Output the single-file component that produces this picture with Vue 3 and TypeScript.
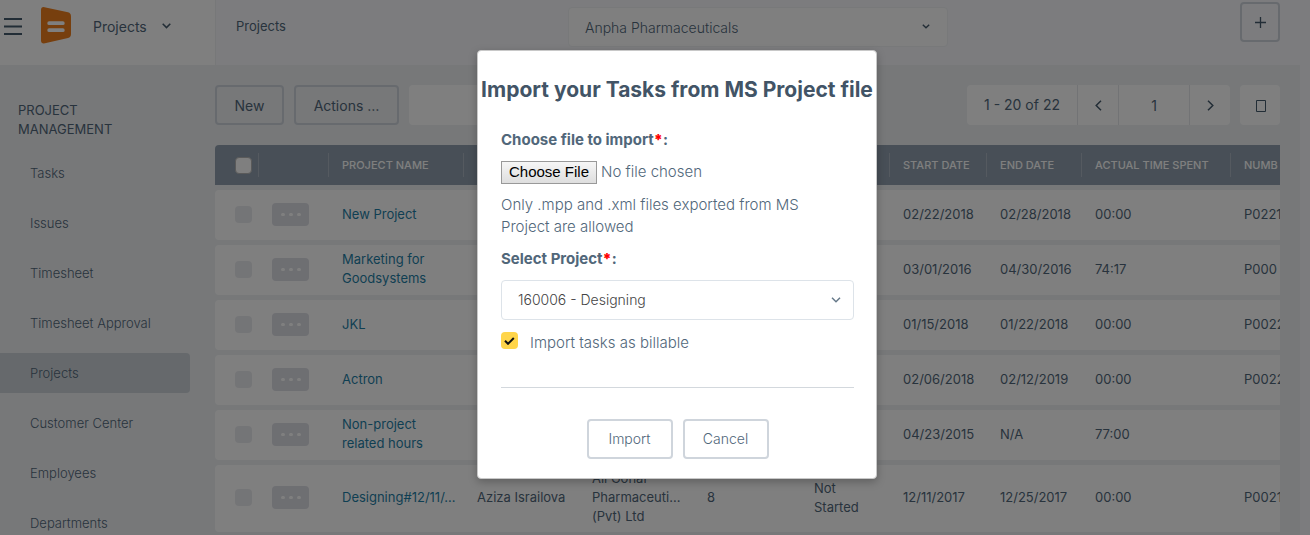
<script setup lang="ts">
import { ref } from 'vue'

interface ProjectRow {
  name: string
  manager: string
  client: string
  count: string
  status: string
  start: string
  end: string
  spent: string
  number: string
}

const menu: string[] = [
  'Tasks', 'Issues', 'Timesheet', 'Timesheet Approval',
  'Projects', 'Customer Center', 'Employees', 'Departments',
]
const active = 'Projects'

const columns: string[] = ['PROJECT NAME', '', '', '', '', 'START DATE', 'END DATE', 'ACTUAL TIME SPENT', 'NUMB']

const row = (name: string, start: string, end: string, spent: string, number: string): ProjectRow => ({
  name, start, end, spent, number, manager: '', client: '', count: '', status: '',
})

const rows: ProjectRow[] = [
  row('New Project', '02/22/2018', '02/28/2018', '00:00', 'P0221'),
  row('Marketing for Goodsystems', '03/01/2016', '04/30/2016', '74:17', 'P000'),
  row('JKL', '01/15/2018', '01/22/2018', '00:00', 'P0022'),
  row('Actron', '02/06/2018', '02/12/2019', '00:00', 'P0022'),
  row('Non-project related hours', '04/23/2015', 'N/A', '77:00', ''),
  {
    name: 'Designing#12/11/…',
    manager: 'Aziza Israilova',
    client: 'Ali Gohar Pharmaceuti… (Pvt) Ltd',
    count: '8',
    status: 'Not Started',
    start: '12/11/2017',
    end: '12/25/2017',
    spent: '00:00',
    number: 'P0021',
  },
]

const billable = ref(true)
</script>

<template>
  <div class="app">
    <div class="shell">
      <header class="brand">
        <button class="plain" type="button" aria-label="Menu">
          <svg width="18" height="17" viewBox="0 0 18 17"><path d="M0 1h18M0 8.500h18M0 16h18" fill="none" stroke="#455a6c" stroke-width="2" /></svg>
        </button>
        <svg class="logo" width="30" height="37" viewBox="0 0 30 37">
          <path d="M3.500.2 27 5.200q3 .8 3 4V27q0 3.200-3 4L4 36.300Q0 37 0 33.500V3Q0-.4 3.500.2Z" fill="#ee7f1d" />
          <path d="M8.200 16.200h13.600M8.200 23.200h13.600" stroke="#fff" stroke-width="3.800" stroke-linecap="round" />
        </svg>
        <button class="plain switcher" type="button">
          Projects
          <svg width="9" height="6" viewBox="0 0 9 6"><path d="m.7.700 3.800 3.900L8.300.7" fill="none" stroke="#455a6c" stroke-width="1.500" /></svg>
        </button>
      </header>

      <header class="topbar">
        <span>Projects</span>
        <div class="pick org">
          <select aria-label="Organization"><option>Anpha Pharmaceuticals</option></select>
          <svg width="8" height="5" viewBox="0 0 8 5"><path d="m.8.700 3.200 3L7.200.7" fill="none" stroke="#455a6c" stroke-width="1.400" /></svg>
        </div>
        <button class="btn plus" type="button" aria-label="Add">
          <svg width="11" height="11" viewBox="0 0 11 11"><path d="M5.500 0v11M0 5.500h11" stroke="#455a6c" stroke-width="1.300" /></svg>
        </button>
      </header>

      <nav class="side">
        <h2>PROJECT MANAGEMENT</h2>
        <a v-for="m in menu" :key="m" href="#" :class="{ on: m === active }">{{ m }}</a>
      </nav>

      <main class="main">
        <div class="tools">
          <button class="btn new" type="button">New</button>
          <button class="btn bulk" type="button">Actions …</button>
          <input class="search" type="text" aria-label="Search" />
          <div class="pager">
            <span class="range">1 - 20 of 22</span>
            <button type="button" aria-label="Previous page">
              <svg width="7" height="11" viewBox="0 0 7 11"><path d="M6 .700 1.200 5.500 6 10.300" fill="none" stroke="#455a6c" stroke-width="1.500" /></svg>
            </button>
            <input type="text" value="1" aria-label="Page" />
            <button type="button" aria-label="Next page">
              <svg width="7" height="11" viewBox="0 0 7 11"><path d="M1 .700 5.800 5.500 1 10.300" fill="none" stroke="#455a6c" stroke-width="1.500" /></svg>
            </button>
          </div>
          <button class="config" type="button" aria-label="Columns">
            <svg width="10" height="12" viewBox="0 0 10 12"><path d="M.5.500h9v11h-9z" fill="none" stroke="#455a6c" /></svg>
          </button>
        </div>

        <div class="scroller">
          <table>
            <colgroup>
              <col class="w43" /><col class="w70" /><col class="w135" /><col class="w115" /><col class="w115" />
              <col class="w107" /><col class="w89" /><col class="w97" /><col class="w95" /><col class="w149" /><col />
            </colgroup>
            <thead>
              <tr>
                <th class="tick"><span><input type="checkbox" aria-label="Select all" /></span></th>
                <th><span></span></th>
                <th v-for="(c, i) in columns" :key="i"><span>{{ c }}</span></th>
              </tr>
            </thead>
            <tbody>
              <tr v-for="r in rows" :key="r.name">
                <td class="tick"><input type="checkbox" :aria-label="r.name" /></td>
                <td>
                  <button class="more" type="button" aria-label="Row actions"><i></i><i></i><i></i></button>
                </td>
                <td><a href="#">{{ r.name }}</a></td>
                <td class="one">{{ r.manager }}</td>
                <td>{{ r.client }}</td>
                <td>{{ r.count }}</td>
                <td>{{ r.status }}</td>
                <td class="one">{{ r.start }}</td>
                <td class="one">{{ r.end }}</td>
                <td>{{ r.spent }}</td>
                <td class="one">{{ r.number }}</td>
              </tr>
            </tbody>
          </table>
        </div>
      </main>
      <div class="track"></div>
    </div>

    <div class="overlay">
      <form class="modal" role="dialog" aria-labelledby="dialog-title" @submit.prevent>
        <h1 id="dialog-title">Import your Tasks from MS Project file</h1>
        <div class="body">
          <label class="field" for="file">Choose file to import<b>*</b>:</label>
          <input id="file" class="file" type="file" />
          <p>Only .mpp and .xml files exported from MS Project are allowed</p>
          <label class="field" for="project">Select Project<b>*</b>:</label>
          <div class="pick project">
            <select id="project"><option>160006 - Designing</option></select>
            <svg width="10" height="6" viewBox="0 0 10 6"><path d="m1 .700 4 4 4-4" fill="none" stroke="#66798a" stroke-width="1.500" /></svg>
          </div>
          <div class="billable">
            <span class="box">
              <input id="billable" v-model="billable" type="checkbox" />
              <svg v-if="billable" width="11" height="8" viewBox="0 0 11 8"><path d="m1 3.800 3 3L9.800 1" fill="none" stroke="#111" stroke-width="2" /></svg>
            </span>
            <label for="billable">Import tasks as billable</label>
          </div>
          <div class="actions">
            <button class="btn" type="submit">Import</button>
            <button class="btn" type="button">Cancel</button>
          </div>
        </div>
      </form>
    </div>
  </div>
</template>

<style>
body {
  margin: 0;
  background: #eef0f3;
}
</style>

<style scoped>
.app {
  position: relative;
  height: 100vh;
  overflow: hidden;
  font: 13px/19px Inter, "Open Sans", sans-serif;
  color: #51677a;
}
.app * {
  box-sizing: border-box;
}
button, input, select {
  font: inherit;
  color: inherit;
  margin: 0;
}
a {
  text-decoration: none;
}
svg {
  display: block;
  flex: none;
}
.shell {
  display: grid;
  grid-template: 65px 1fr / 215px minmax(0, 1fr) 10px;
  min-height: 100%;
}
.brand {
  display: flex;
  align-items: flex-start;
  padding: 7px 4px;
  background: #fff;
}
.plain {
  display: flex;
  align-items: center;
  height: 38px;
  padding: 0;
  border: 0;
  background: none;
}
.logo {
  margin-left: 19px;
}
.switcher {
  gap: 15px;
  margin-left: 22px;
  font-size: 14px;
}
.topbar {
  display: grid;
  grid-template-columns: 1fr 380px 1fr;
  padding: 2px 20px;
  background: #f8f9fc;
  border-left: 1px solid #eef0f3;
}
.topbar > span {
  padding-top: 15px;
}
.pick {
  position: relative;
}
.pick select {
  appearance: none;
  display: block;
  width: 100%;
  height: 40px;
  padding: 0 16px;
  border: 1px solid #dde3e9;
  border-radius: 4px;
  background: #fff;
  font-size: 14px;
}
.pick svg {
  position: absolute;
  right: 13px;
  top: 17px;
  pointer-events: none;
}
.org {
  padding-top: 5px;
}
.org select {
  border-color: #f0f2f5;
  font-weight: 300;
}
.org svg {
  top: 22px;
  right: 18px;
}
.btn {
  height: 40px;
  padding: 0;
  border: 2px solid #cfd5dc;
  border-radius: 4px;
  background: none;
  font-size: 14px;
}
.new {
  width: 69px;
}
.bulk {
  width: 105px;
}
.plus {
  display: flex;
  align-items: center;
  justify-content: center;
  justify-self: end;
  width: 40px;
}
.side {
  display: flex;
  flex-direction: column;
  gap: 10px;
  padding: 36px 25px 0 0;
}
.side h2 {
  width: 140px;
  margin: 0 0 4px;
  padding-left: 18px;
  font-size: 13px;
  font-weight: 400;
}
.side a {
  padding-left: 30px;
  line-height: 40px;
  font-weight: 300;
  color: #51677a;
  border-radius: 0 4px 4px 0;
}
.side .on {
  background: #ccd3d8;
}
.main {
  padding: 20px 20px 0 0;
}
.tools {
  display: flex;
  gap: 10px;
}
.search {
  width: 260px;
  border: 0;
  border-radius: 4px;
  background: #fff;
}
.pager {
  display: flex;
  height: 40px;
  margin-left: auto;
  border-radius: 4px;
  background: #fff;
  font-size: 14px;
}
.pager > * {
  border: 0;
  border-left: 1px solid #e4e7eb;
  background: none;
}
.range {
  width: 110px;
  border-left: 0;
  line-height: 39px;
  text-align: center;
}
.pager button {
  display: flex;
  align-items: center;
  justify-content: center;
  width: 41px;
  padding: 0;
}
.pager input {
  width: 71px;
  padding: 0;
  text-align: center;
}
.config {
  display: flex;
  align-items: center;
  justify-content: center;
  width: 40px;
  padding: 2px 0 0 2px;
  border: 0;
  border-radius: 4px;
  background: #fff;
}
.scroller {
  margin-top: 15px;
  overflow: hidden;
}
table {
  width: 100%;
  min-width: 1135px;
  table-layout: fixed;
  border-collapse: separate;
  border-spacing: 0 5px;
}
.w43 { width: 43px; }
.w70 { width: 70px; }
.w89 { width: 89px; }
.w95 { width: 95px; }
.w97 { width: 97px; }
.w107 { width: 107px; }
.w115 { width: 115px; }
.w135 { width: 135px; }
.w149 { width: 149px; }
th {
  height: 40px;
  padding: 0;
  background: #909fae;
  color: #fff;
  font-size: 11px;
  font-weight: 500;
  text-align: left;
  white-space: nowrap;
}
th span {
  display: flex;
  align-items: center;
  height: 24px;
  padding-left: 13px;
  border-left: 1px solid #aab5c0;
}
th:first-child {
  border-radius: 4px 0 0 0;
}
td {
  height: 50px;
  padding: 4px 6px 6px 14px;
  background: #fff;
}
td:first-child {
  border-radius: 4px 0 0 4px;
}
td.one {
  white-space: nowrap;
  padding-right: 0;
}
td.tick, th.tick span {
  padding-left: 20px;
  border-left: 0;
}
td a {
  color: #1f7fa6;
}
.tick input {
  appearance: none;
  display: block;
  width: 17px;
  height: 17px;
  border-radius: 4px;
  background: #e9ebee;
}
th.tick input {
  border: 1px solid #b4b4b4;
  background: #fff;
}
.more {
  display: flex;
  align-items: center;
  justify-content: center;
  gap: 4px;
  width: 37px;
  height: 23px;
  padding: 0;
  border: 0;
  border-radius: 4px;
  background: #dcdee5;
}
.more i {
  width: 4px;
  height: 3px;
  border-radius: 2px;
  background: #fff;
}
.track {
  grid-column: 3;
  grid-row: 1 / 3;
  background: #f8f9fc;
}
.overlay {
  position: absolute;
  inset: 0;
  display: flex;
  align-items: flex-start;
  justify-content: center;
  padding: 50px 0 0 44px;
  background: rgba(0, 0, 0, 0.5);
}
.modal {
  width: 400px;
  border: 1px solid #c8c8c8;
  border-radius: 4px;
  background: #fff;
  box-shadow: 0 3px 9px rgba(0, 0, 0, 0.25);
}
h1 {
  margin: 0;
  padding-top: 27px;
  font-size: 21px;
  line-height: 24px;
  font-weight: 700;
  text-align: center;
  white-space: nowrap;
  color: #425466;
}
.body {
  padding: 27px 22px 19px 23px;
  font-size: 15px;
  line-height: 22px;
  font-weight: 300;
}
.field {
  display: block;
  font-weight: 700;
}
.field b {
  color: #f00;
}
.file {
  display: block;
  width: 100%;
  height: 24px;
  margin-top: 9px;
  line-height: 23px;
}
.file::file-selector-button {
  height: 23px;
  margin: 0 4px 0 0;
  padding: 0 7px;
  border: 1px solid #999;
  border-radius: 0;
  background: linear-gradient(#f6f6f6, #dedede);
  font: 15px/20px "Liberation Sans", sans-serif;
  color: #000;
}
p {
  margin: 10px 0;
  padding-right: 30px;
}
.project {
  margin-top: 10px;
}
.project select {
  color: #444;
}
.billable {
  display: flex;
  gap: 12px;
  padding: 12px 0 33px;
  border-bottom: 1px solid #d3d8dd;
}
.box {
  position: relative;
  height: 17px;
}
.box input {
  appearance: none;
  display: block;
  width: 17px;
  height: 17px;
  border-radius: 4px;
  background: #ffd54a;
}
.box svg {
  position: absolute;
  left: 3px;
  top: 5px;
  pointer-events: none;
}
.actions {
  display: flex;
  justify-content: center;
  gap: 10px;
  padding-top: 31px;
}
.actions .btn {
  width: 86px;
}
</style>
